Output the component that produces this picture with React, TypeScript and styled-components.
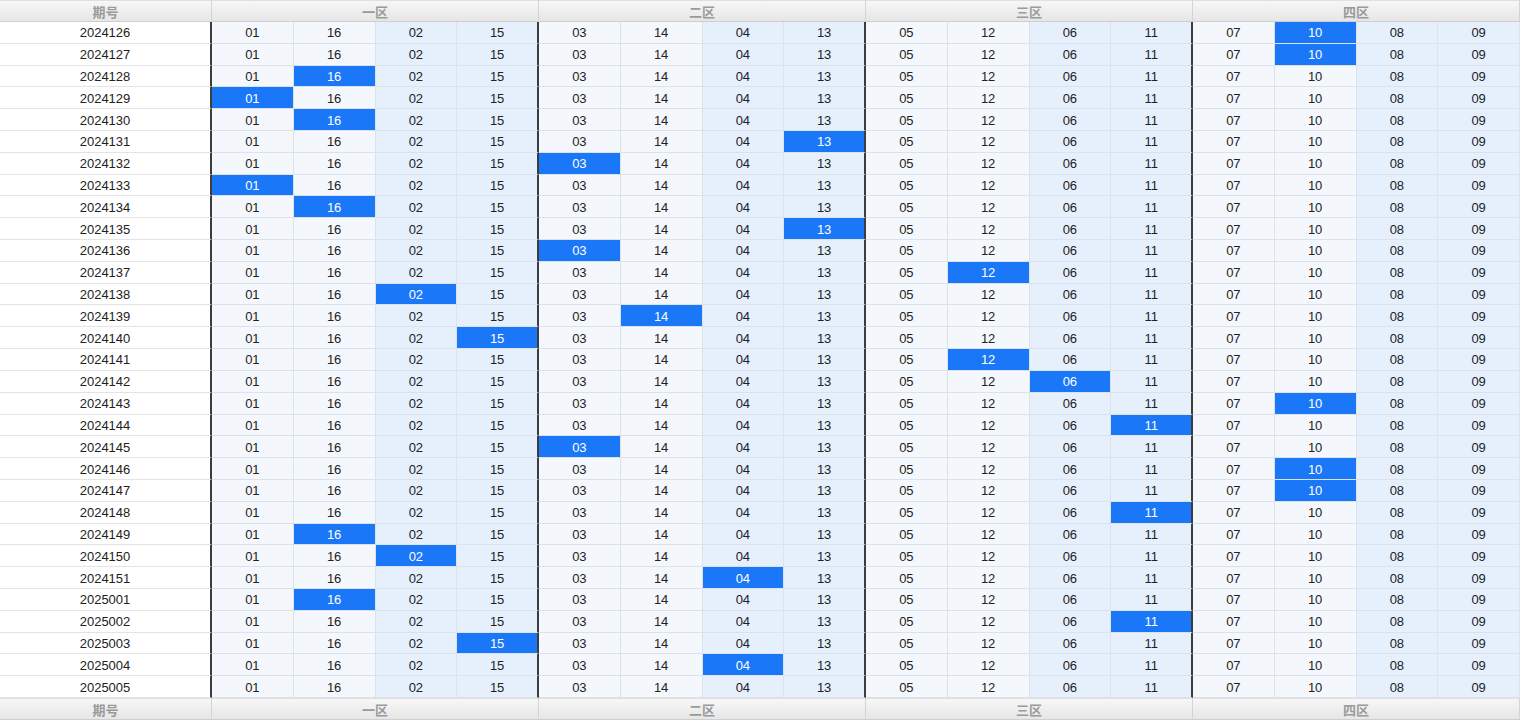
import React from "react";
import styled, { createGlobalStyle } from "styled-components";

const Global = createGlobalStyle`
  html, body { margin: 0; padding: 0; background: #fff; }
  body { font-family: "Liberation Sans", Arial, "Noto Sans CJK SC", sans-serif; }
  #root { width: 1520px; height: 720px; overflow: hidden; }
`;

const Grid = styled.div`
  display: grid;
  width: 1520px;
  height: 720px;
  grid-template-columns: 212px repeat(16, 1fr);
  grid-template-rows: 22px repeat(31, 1fr) 22px;
  font-size: 13px;
`;

const HeadCell = styled.div<{ $span: number }>`
  grid-column: span ${(p) => p.$span};
  box-sizing: border-box;
  display: flex;
  align-items: center;
  justify-content: center;
  background: linear-gradient(#f7f7f7, #e6e6e6);
  border-right: 1px solid #d4d4d4;
  border-top: 1px solid #e0e0e0;
  border-bottom: 1px solid #cfcfcf;
  color: #9a9a9a;
  font-weight: bold;
  font-size: 13px;
  font-family: "Liberation Sans", "Noto Sans CJK SC", sans-serif;
`;

const PeriodCell = styled.div`
  box-sizing: border-box;
  display: flex;
  align-items: center;
  justify-content: center;
  padding-top: 1px;
  background: #fff;
  color: #222;
  border-bottom: 1px solid #e4e4e4;
  border-right: 2px solid #3c3c3c;
`;

const NumCell = styled.div<{ $tone: "light" | "blue"; $hit: boolean; $zoneEnd: boolean }>`
  box-sizing: border-box;
  display: flex;
  align-items: center;
  justify-content: center;
  padding-top: 1px;
  color: ${(p) => (p.$hit ? "#fff" : "#222")};
  background: ${(p) =>
    p.$hit ? "#1a77f7" : p.$tone === "light" ? "#f4f8fd" : "#e5f0fc"};
  border-bottom: 1px solid #dbe2ea;
  border-right: ${(p) => (p.$zoneEnd ? "2px solid #3c3c3c" : "1px solid #dbe2ea")};
`;

const values = ["01", "16", "02", "15", "03", "14", "04", "13", "05", "12", "06", "11", "07", "10", "08", "09"];

const rows: [string, number][] = [
  ["2024126", 13],
  ["2024127", 13],
  ["2024128", 1],
  ["2024129", 0],
  ["2024130", 1],
  ["2024131", 7],
  ["2024132", 4],
  ["2024133", 0],
  ["2024134", 1],
  ["2024135", 7],
  ["2024136", 4],
  ["2024137", 9],
  ["2024138", 2],
  ["2024139", 5],
  ["2024140", 3],
  ["2024141", 9],
  ["2024142", 10],
  ["2024143", 13],
  ["2024144", 11],
  ["2024145", 4],
  ["2024146", 13],
  ["2024147", 13],
  ["2024148", 11],
  ["2024149", 1],
  ["2024150", 2],
  ["2024151", 6],
  ["2025001", 1],
  ["2025002", 11],
  ["2025003", 3],
  ["2025004", 6],
  ["2025005", -1],
];

const zones = ["一区", "二区", "三区", "四区"];

const HeaderRow = () => (
  <>
    <HeadCell $span={1}>期号</HeadCell>
    {zones.map((z) => (
      <HeadCell key={z} $span={4}>
        {z}
      </HeadCell>
    ))}
  </>
);

export default function App() {
  return (
    <>
      <Global />
      <Grid>
        <HeaderRow />
        {rows.map(([period, hit]) => (
          <React.Fragment key={period}>
            <PeriodCell>{period}</PeriodCell>
            {values.map((v, i) => (
              <NumCell
                key={i}
                $tone={i % 4 < 2 ? "light" : "blue"}
                $hit={i === hit}
                $zoneEnd={i % 4 === 3 && i !== 15}
              >
                {v}
              </NumCell>
            ))}
          </React.Fragment>
        ))}
        <HeaderRow />
      </Grid>
    </>
  );
}
